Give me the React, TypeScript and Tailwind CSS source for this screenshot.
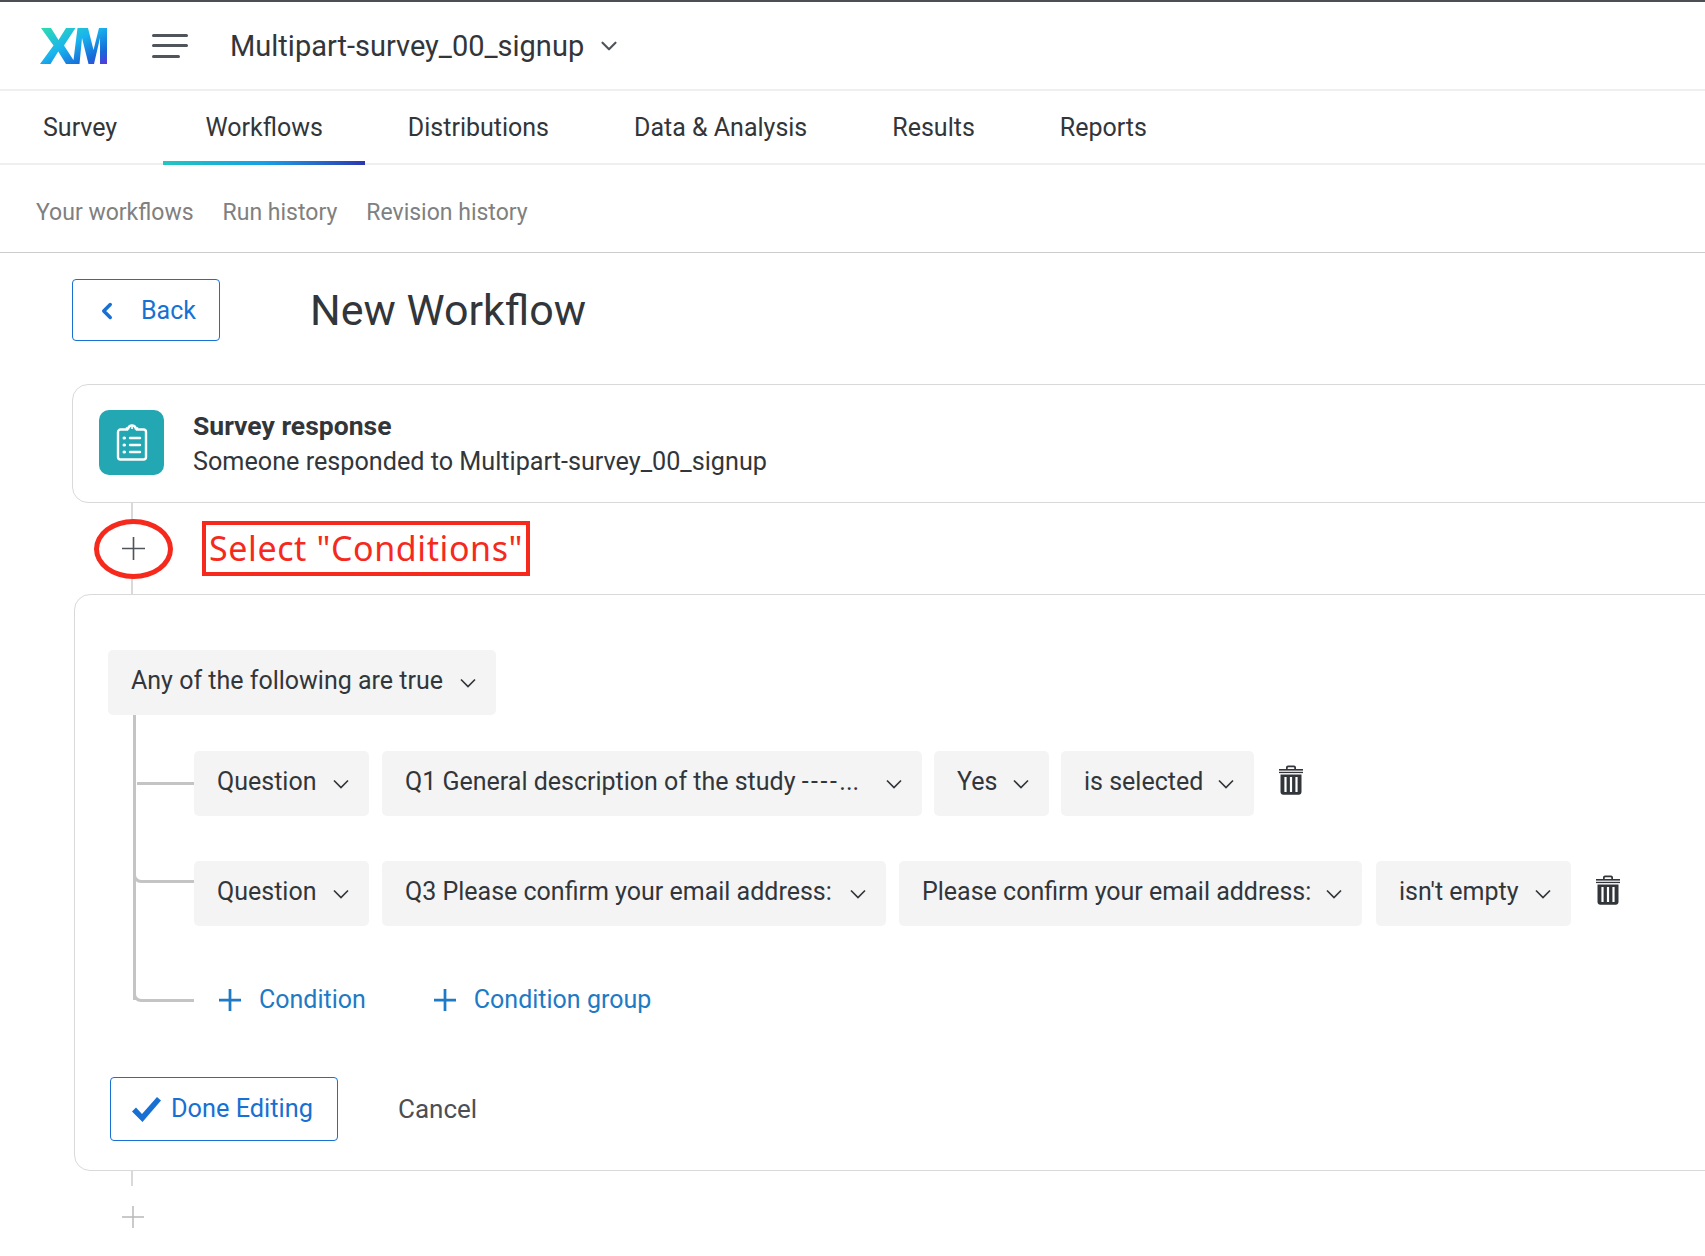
import type { ReactNode } from "react";
import { ChevronDown, ChevronLeft } from "lucide-react";

const font = "font-['Roboto',sans-serif]";

function Chevron({ className = "" }: { className?: string }) {
  return (
    <svg className={`shrink-0 ${className}`} width="16" height="10" viewBox="0 0 16 10" fill="none" stroke="#32363a" strokeWidth="1.7">
      <path d="M1 1.5l7 7 7-7" />
    </svg>
  );
}

function Trash() {
  return (
    <svg width="24" height="30" viewBox="0 0 24 30" fill="#32363a">
      <path d="M7 4V2.5C7 1.4 7.9.6 9 .6h6c1.100 0 2 .8 2 1.900V4h-1.700V2.800c0-.4-.3-.6-.7-.6H9.400c-.4 0-.7.2-.7.6V4z" />
      <rect x="0" y="4" width="24" height="1.600" />
      <rect x="0" y="6.800" width="24" height="1.300" />
      <path d="M1.500 9.500h21V27c0 1.500-1.200 2.700-2.700 2.700H4.200c-1.500 0-2.700-1.200-2.700-2.700zM5.400 12v15h2.200V12zm5.500 0v15h2.200V12zm5.500 0v15h2.200V12z" fillRule="evenodd" />
    </svg>
  );
}

function Plus({ size, color, width }: { size: number; color: string; width: number }) {
  return (
    <svg width={size} height={size} viewBox="0 0 24 24" stroke={color} strokeWidth={width} fill="none">
      <path d="M12 0v24M0 12h24" />
    </svg>
  );
}

function Dropdown({ label, width }: { label: ReactNode; width: string }) {
  return (
    <div className={`flex h-[65px] ${width} shrink-0 items-center justify-between rounded-[5px] bg-[#f4f4f4] pl-[23px] pr-[20px] text-[25px] text-[#32363a]`}>
      <span className="mb-[3px] whitespace-nowrap">{label}</span>
      <Chevron />
    </div>
  );
}

const tabs = ["Survey", "Workflows", "Distributions", "Data & Analysis", "Results", "Reports"];

export default function App() {
  return (
    <div className={`h-[1256px] w-[1705px] overflow-hidden bg-white ${font}`}>
      <div className="h-[2px] bg-[#4b4f54]" />

      <header className="flex h-[89px] items-center border-b-2 border-[#efefef] pl-[40px]">
        <svg width="67" height="36" viewBox="0 0 67 36">
          <defs>
            <linearGradient id="xm" x1="0" y1="0" x2="1" y2="1">
              <stop offset="0" stopColor="#2fdcb0" />
              <stop offset="0.45" stopColor="#19b4ee" />
              <stop offset="0.8" stopColor="#1769d8" />
              <stop offset="1" stopColor="#5a35dd" />
            </linearGradient>
          </defs>
          <path
            fill="url(#xm)"
            d="M1 0h10l7.500 12L26 0h9.500L24 17.500 36 36H26l-7.800-12.500L10.500 36H0l13.500-18.500zM37.500 0H48l5.500 22L59 0h8v36h-7V10l-6 26h-5.500L42 10l-2.500 26H33z"
          />
        </svg>
        <div className="ml-[45px] flex w-[36px] flex-col gap-[7.500px]">
          <div className="h-[3px] rounded-full bg-[#50555b]" />
          <div className="h-[3px] rounded-full bg-[#50555b]" />
          <div className="h-[3px] w-[28px] rounded-full bg-[#50555b]" />
        </div>
        <span className="ml-[42px] pt-[2px] text-[29px] text-[#32363a]">Multipart-survey_00_signup</span>
        <ChevronDown size={26} strokeWidth={2} className="ml-[12px] text-[#50555b]" />
      </header>

      <nav className="flex h-[74px] border-b-2 border-[#efefef]">
        {tabs.map((tab) => (
          <div
            key={tab}
            className={`relative flex items-center whitespace-nowrap pt-[2px] text-[25px] text-[#32363a] ${tab === "Survey" ? "w-[163px] pl-[43px]" : "px-[42.500px]"}`}
          >
            {tab}
            {tab === "Workflows" && (
              <div className="absolute inset-x-0 bottom-[-2px] h-[4px] bg-gradient-to-r from-[#24c6c0] via-[#18a0e6] to-[#2b35b0]" />
            )}
          </div>
        ))}
      </nav>

      <div className="flex h-[88px] items-center gap-[29px] border-b border-[#cccccc] pl-[36px] pt-[9px] text-[23px] text-[#808080]">
        <span>Your workflows</span>
        <span>Run history</span>
        <span>Revision history</span>
      </div>

      <div className="flex items-center pl-[72px] pt-[26px]">
        <button type="button" className="flex h-[62px] w-[148px] items-center rounded-[4px] border border-[#1770d2] pl-[23px] pt-[2px] text-[25px] text-[#1770d2]">
          <ChevronLeft size={26} strokeWidth={3.2} className="-ml-[2px]" />
          <span className="ml-[21px]">Back</span>
        </button>
        <h1 className="ml-[90px] text-[43px] font-normal leading-none text-[#32363a]">New Workflow</h1>
      </div>

      <section className="ml-[72px] mt-[43px] flex h-[119px] w-[1800px] items-center rounded-[16px] border border-[#d9d9d9] pl-[26px]">
        <div className="mb-[3px] flex h-[65px] w-[65px] items-center justify-center rounded-[10px] bg-[#22a7b3]">
          <svg width="32" height="38" viewBox="0 0 32 38" fill="none" stroke="white" strokeWidth="2.400" strokeLinecap="round">
            <path d="M11 6.500V5.500h1.200a3.900 3.900 0 017.600 0H21v1H27.500a2.500 2.500 0 012.500 2.500v25a2.500 2.500 0 01-2.500 2.500h-23A2.500 2.500 0 012 34V9a2.500 2.500 0 012.500-2.500z" />
            <path d="M14 15h10M14 22h10M14 29h10" />
            <path d="M8 15h.5M8 22h.5M8 29h.5" strokeWidth="3" />
            <path d="M16 5h.1" strokeWidth="2" />
          </svg>
        </div>
        <div className="ml-[29px] text-[#32363a]">
          <p className="text-[26.500px] font-bold leading-[36px]">Survey response</p>
          <p className="text-[25.200px] leading-[36px]">Someone responded to Multipart-survey_00_signup</p>
        </div>
      </section>

      <div className="relative flex h-[91px] items-center pl-[94px]">
        <div className="absolute bottom-0 left-[131px] top-0 w-[2px] bg-[#d9d9d9]" />
        <div className="relative flex h-[60px] w-[79px] items-center justify-center rounded-[50%] border-[5px] border-[#f52a1d] bg-white">
          <Plus size={23} color="#50555b" width={1.7} />
        </div>
        <div className="ml-[29px] flex h-[55px] w-[328px] items-center whitespace-nowrap border-[4px] border-[#f52a1d] pl-[3px] font-['Noto_Sans',sans-serif] text-[34px] tracking-[0.6px] text-[#f52a1d]">
          Select "Conditions"
        </div>
      </div>

      <section className="ml-[74px] h-[577px] w-[1800px] rounded-[16px] border border-[#d9d9d9] pl-[33px] pt-[55px]">
        <Dropdown label="Any of the following are true" width="w-[388px]" />

        <div className="relative pl-[86px] pt-[36px]">
          <div className="absolute bottom-[24px] left-[25px] top-0 w-[3px] bg-[#c4c4c4]" />

          <div className="flex items-center">
            <div className="-ml-[57px] h-[3px] w-[57px] bg-[#c4c4c4]" />
            <Dropdown label="Question" width="w-[175px]" />
            <div className="ml-[13px]">
              <Dropdown
                label={
                  <>
                    Q1 General description of the study <span className="tracking-[2.500px]">----</span>...
                  </>
                }
                width="w-[540px]"
              />
            </div>
            <div className="ml-[12px]">
              <Dropdown label="Yes" width="w-[115px]" />
            </div>
            <div className="ml-[12px]">
              <Dropdown label="is selected" width="w-[193px]" />
            </div>
            <div className="mb-[8px] ml-[25px]">
              <Trash />
            </div>
          </div>

          <div className="mt-[45px] flex items-center">
            <div className="-ml-[61px] mb-[32px] h-[10px] w-[61px] rounded-bl-[8px] border-b-[3px] border-l-[3px] border-[#c4c4c4]" />
            <Dropdown label="Question" width="w-[175px]" />
            <div className="ml-[13px]">
              <Dropdown label="Q3 Please confirm your email address:" width="w-[504px]" />
            </div>
            <div className="ml-[13px]">
              <Dropdown label="Please confirm your email address:" width="w-[463px]" />
            </div>
            <div className="ml-[14px]">
              <Dropdown label="isn't empty" width="w-[195px]" />
            </div>
            <div className="mb-[8px] ml-[25px]">
              <Trash />
            </div>
          </div>

          <div className="mt-[50px] flex h-[48px] items-center text-[25px] text-[#1e7ac4]">
            <div className="-ml-[61px] h-[26px] w-[61px] -translate-y-[11px] rounded-bl-[8px] border-b-[3px] border-l-[3px] border-[#c4c4c4]" />
            <div className="ml-[25px] flex items-center">
              <Plus size={22} color="#1e7ac4" width={3} />
              <span className="ml-[18px]">Condition</span>
            </div>
            <div className="ml-[68px] flex items-center">
              <Plus size={22} color="#1e7ac4" width={3} />
              <span className="ml-[18px]">Condition group</span>
            </div>
          </div>
        </div>

        <div className="mt-[53px] flex items-center pl-[2px]">
          <button type="button" className="flex h-[64px] w-[228px] items-center rounded-[4px] border border-[#1770d2] pl-[21px] text-[25.300px] text-[#1770d2]">
            <svg width="29" height="25" viewBox="0 0 29 25" fill="#1770d2">
              <path d="M0 14.500l4-4 6 6.500L25 0l4 3.500L10.500 25z" />
            </svg>
            <span className="ml-[10px]">Done Editing</span>
          </button>
          <span className="ml-[60px] text-[26px] text-[#4b4f54]">Cancel</span>
        </div>
      </section>

      <div className="ml-[131px] h-[15px] w-[2px] bg-[#d9d9d9]" />
      <div className="ml-[122px] mt-[20px]">
        <Plus size={22} color="#b8b8b8" width={1.6} />
      </div>
    </div>
  );
}
